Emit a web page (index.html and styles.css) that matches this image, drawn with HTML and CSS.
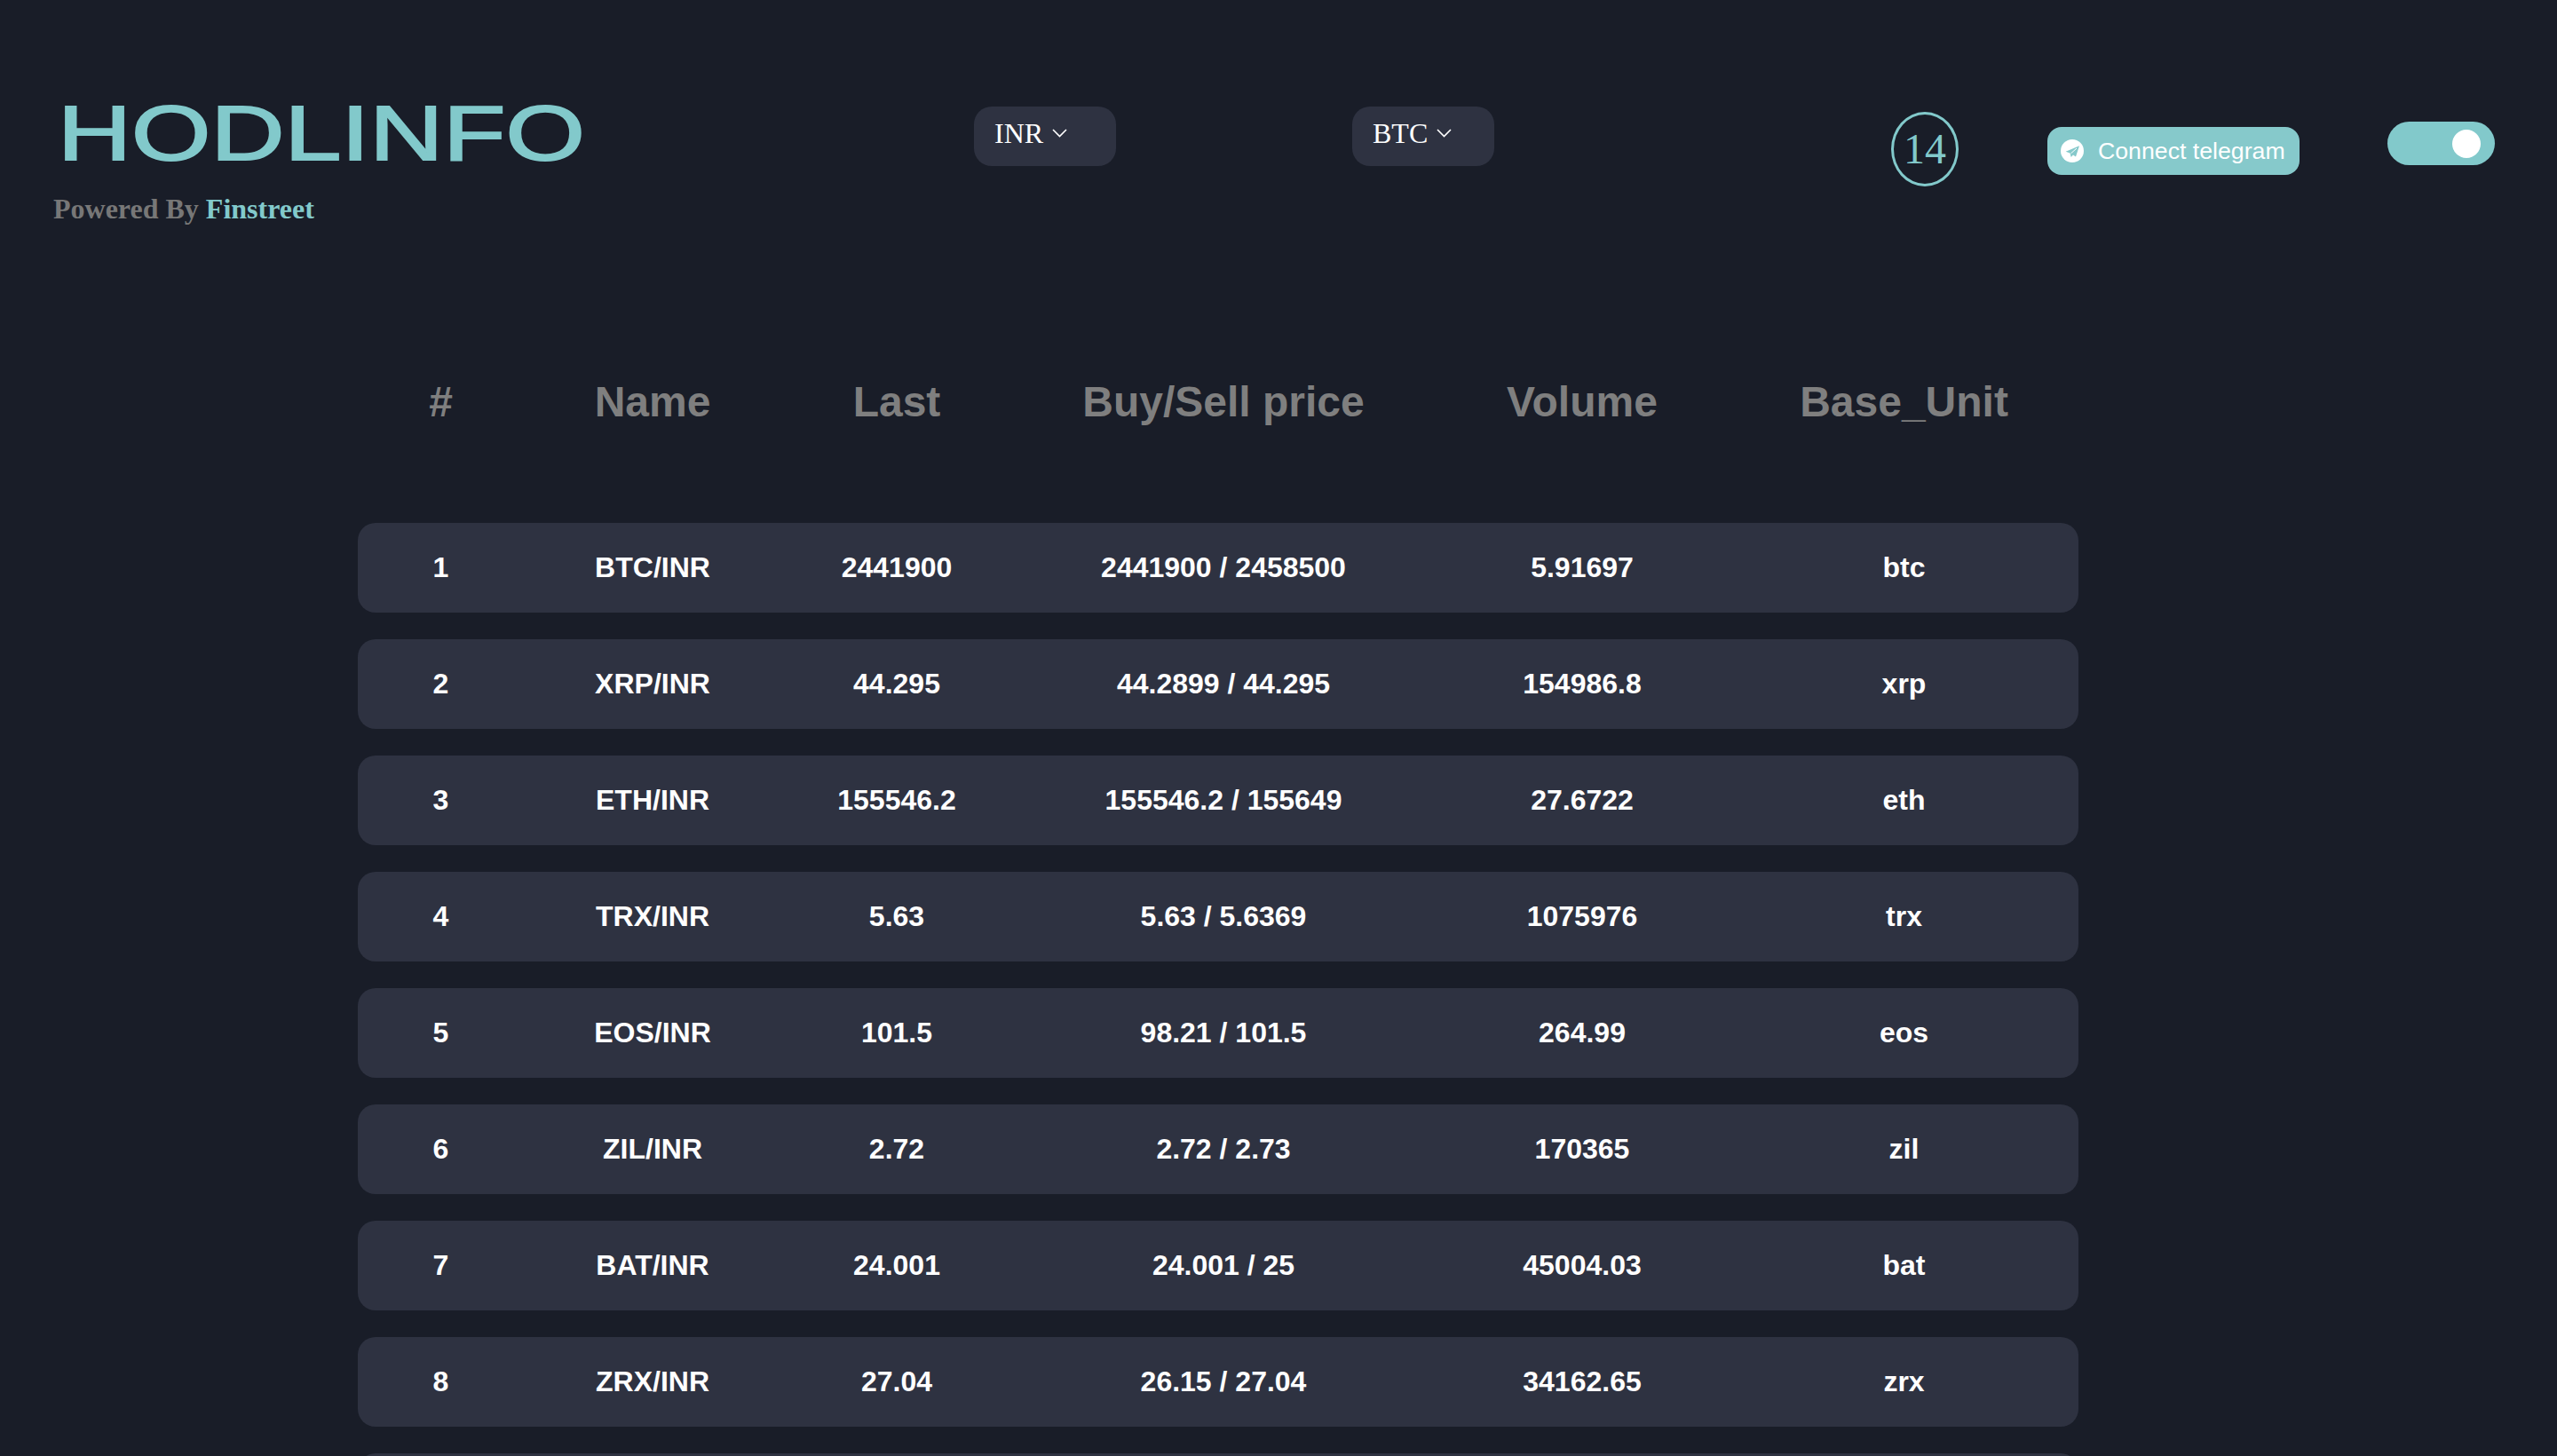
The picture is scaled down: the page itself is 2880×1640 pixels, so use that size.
FILE: index.html
```html
<!DOCTYPE html>
<html lang="en">
<head>
    <meta charset="UTF-8">
    <meta name="viewport" content="width=device-width, initial-scale=1.0">
    <title>Hodlinfo</title>
    <link rel="stylesheet" href="styles.css">
</head>
<body>
    <header class="topbar">
        <div class="brand">
            <div class="logo">HODLINFO</div>
            <div class="powered">Powered By <span class="teal">Finstreet</span></div>
        </div>
        <div class="picker picker-first">INR
            <svg class="chevron" viewBox="0 0 17 10"><path d="M1 1l7.500 7.500L16 1"/></svg>
        </div>
        <div class="picker picker-second">BTC
            <svg class="chevron" viewBox="0 0 17 10"><path d="M1 1l7.500 7.500L16 1"/></svg>
        </div>
        <div class="timer">14</div>
        <button class="telegram">
            <svg class="plane" viewBox="0 0 26 26">
                <circle cx="13" cy="13" r="13" fill="#fff"/>
                <path d="M21 7.300L5.700 13.800l4.800 1.800 1.200 4.400 2.300-2.600 3 2z" fill="#86c9cb"/>
                <path d="M18 10l-6.500 5.800" fill="none" stroke="#fff" stroke-width="1"/>
            </svg>
            Connect telegram
        </button>
        <div class="toggle"><span class="knob"></span></div>
    </header>

    <main class="board">
        <table>
            <thead>
                <tr>
                    <th class="col-num">#</th>
                    <th class="col-name">Name</th>
                    <th class="col-last">Last</th>
                    <th class="col-price">Buy/Sell price</th>
                    <th class="col-vol">Volume</th>
                    <th class="col-unit">Base_Unit</th>
                </tr>
            </thead>
            <tbody>
                <tr><td>1</td><td>BTC/INR</td><td>2441900</td><td>2441900 / 2458500</td><td>5.91697</td><td>btc</td></tr>
                <tr><td>2</td><td>XRP/INR</td><td>44.295</td><td>44.2899 / 44.295</td><td>154986.8</td><td>xrp</td></tr>
                <tr><td>3</td><td>ETH/INR</td><td>155546.2</td><td>155546.2 / 155649</td><td>27.6722</td><td>eth</td></tr>
                <tr><td>4</td><td>TRX/INR</td><td>5.63</td><td>5.63 / 5.6369</td><td>1075976</td><td>trx</td></tr>
                <tr><td>5</td><td>EOS/INR</td><td>101.5</td><td>98.21 / 101.5</td><td>264.99</td><td>eos</td></tr>
                <tr><td>6</td><td>ZIL/INR</td><td>2.72</td><td>2.72 / 2.73</td><td>170365</td><td>zil</td></tr>
                <tr><td>7</td><td>BAT/INR</td><td>24.001</td><td>24.001 / 25</td><td>45004.03</td><td>bat</td></tr>
                <tr><td>8</td><td>ZRX/INR</td><td>27.04</td><td>26.15 / 27.04</td><td>34162.65</td><td>zrx</td></tr>
                <!-- next row is cut off by the window, only its top edge shows -->
                <tr><td></td><td></td><td></td><td></td><td></td><td></td></tr>
            </tbody>
        </table>
    </main>
</body>
</html>
```

FILE: styles.css
```css
html, body {
    margin: 0;
    height: 1640px;
    overflow: hidden;
}
body {
    background-color: #191d28;
    font-family: "Liberation Sans", Arial, sans-serif;
    color: #fff;
}
.teal {
    color: #82c9cb;
}

/* top bar */
.topbar {
    display: flex;
    align-items: flex-start;
    height: 315px;
    padding: 117px 0 0 60px;
    box-sizing: border-box;
}
.brand {
    width: 1037px;
}
.logo {
    height: 65px;
    margin-left: 5px;
    font-size: 88px;
    line-height: 65px;
    color: #82c9cb;
    -webkit-text-stroke: 2px #82c9cb;
    transform: scaleX(1.306);
    transform-origin: left center;
}
.powered {
    margin-top: 35px;
    font-family: "Liberation Serif", "Times New Roman", serif;
    font-size: 32px;
    font-weight: bold;
    color: #777;
}
.picker {
    display: flex;
    align-items: flex-start;
    box-sizing: border-box;
    width: 160px;
    height: 67px;
    margin-top: 3px;
    padding: 12px 0 0 23px;
    background-color: #2e3241;
    border-radius: 20px;
    font-family: "Liberation Serif", "Times New Roman", serif;
    font-size: 32px;
    line-height: 37px;
}
.picker-second {
    margin-left: 266px;
}
.chevron {
    width: 17px;
    height: 10px;
    margin: 13px 0 0 10px;
    fill: none;
    stroke: #fff;
    stroke-width: 1.6;
}
.timer {
    box-sizing: border-box;
    width: 76px;
    height: 84px;
    margin: 9px 0 0 447px;
    border: 3px solid #82c9cb;
    border-radius: 50%;
    font-family: "Liberation Serif", "Times New Roman", serif;
    font-size: 48px;
    line-height: 78px;
    text-align: center;
    color: #82c9cb;
}
.telegram {
    display: flex;
    align-items: center;
    box-sizing: border-box;
    width: 284px;
    height: 54px;
    margin: 26px 0 0 100px;
    padding: 0 0 0 15px;
    border: none;
    border-radius: 16px;
    background-color: #86c9cb;
    color: #fff;
    font-family: "Liberation Sans", Arial, sans-serif;
    font-size: 26.700px;
    white-space: nowrap;
}
.plane {
    width: 26px;
    height: 26px;
    margin-right: 16px;
}
.toggle {
    display: flex;
    align-items: center;
    justify-content: flex-end;
    box-sizing: border-box;
    width: 121px;
    height: 49px;
    margin: 20px 0 0 99px;
    padding-right: 16px;
    border-radius: 25px;
    background-color: #82c9cb;
}
.knob {
    width: 32px;
    height: 32px;
    border-radius: 50%;
    background-color: #fff;
}

/* price table */
.board {
    padding-left: 403px;
}
table {
    width: 1938px;
    table-layout: fixed;
    border-collapse: separate;
    border-spacing: 0 30px;
}
th {
    height: 214px;
    padding: 0;
    font-size: 48px;
    font-weight: bold;
    color: #7f7f7f;
}
td {
    height: 101px;
    padding: 0;
    font-size: 32px;
    font-weight: bold;
    text-align: center;
    background-color: #2e3241;
}
td:first-child {
    border-radius: 20px 0 0 20px;
}
td:last-child {
    border-radius: 0 20px 20px 0;
}
.col-num { width: 187px; }
.col-name { width: 290px; }
.col-last { width: 260px; }
.col-price { width: 476px; }
.col-vol { width: 332px; }
.col-unit { width: 393px; }
```
